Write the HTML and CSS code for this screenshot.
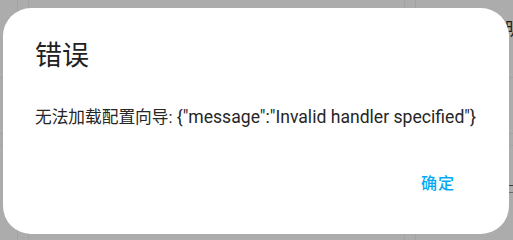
FILE: index.html
```html
<!DOCTYPE html>
<html lang="zh">
<head>
<meta charset="utf-8">
<title>错误</title>
<link rel="stylesheet" href="styles.css">
</head>
<body>
<div class="backdrop">
  <span class="bg-text">明</span>
  <span class="bg-rule"></span>
</div>
<div class="scrim">
  <div class="dialog" role="alertdialog">
    <h2 class="title">错误</h2>
    <p class="content">无法加载配置向导: <span class="msg">{"message":"Invalid handler specified"}</span></p>
    <div class="actions">
      <button class="btn">确定</button>
    </div>
  </div>
</div>
</body>
</html>
```
FILE: styles.css
```css
html, body {
  margin: 0;
  padding: 0;
  width: 513px;
  height: 239px;
  overflow: hidden;
}
body {
  position: relative;
  font-family: Roboto, "Noto Sans CJK SC", sans-serif;
  background-color: #acacac;
  background-image:
    linear-gradient(to right, transparent 17px, #a2a2a2 17px, #a2a2a2 18px, transparent 18px,
      transparent 28px, #a2a2a2 28px, #a2a2a2 29px, transparent 29px,
      transparent 404px, #a2a2a2 404px, #a2a2a2 405px, transparent 405px,
      transparent 415px, #a2a2a2 415px, #a2a2a2 416px, transparent 416px),
    linear-gradient(to bottom, transparent 77px, #a2a2a2 77px, #a2a2a2 78px, transparent 78px,
      transparent 133px, #a2a2a2 133px, #a2a2a2 134px, transparent 134px,
      transparent 145px, #a2a2a2 145px, #a2a2a2 146px, transparent 146px);
}
.backdrop {
  height: 0;
}
.bg-text {
  position: absolute;
  left: 505px;
  top: 19px;
  font-size: 17px;
  color: #1b1b1b;
  line-height: 20px;
}
.bg-rule {
  position: absolute;
  left: 507px;
  top: 185px;
  width: 6px;
  height: 6px;
  border-top: 1px solid #3c3c3c;
  border-bottom: 1px solid #6a6a6a;
}
.scrim {
  position: absolute;
  inset: 0;
  display: flex;
  padding: 8px 4px 5px 3px;
}
.dialog {
  flex: 1;
  min-width: 0;
  background: #ffffff;
  border-radius: 28px;
  padding: 0 28px 0 32px;
  display: flex;
  flex-direction: column;
}
.title {
  margin: 28px 0 0 0;
  font-size: 27px;
  line-height: 40px;
  font-weight: 400;
  color: #212121;
}
.content {
  margin: 29px 0 0 0;
  font-size: 16.7px;
  line-height: 24px;
  color: #262626;
  white-space: nowrap;
}
.msg {
  font-size: 17.6px;
}
.actions {
  display: flex;
  justify-content: flex-end;
  margin-top: 34px;
  padding-right: 18px;
}
.btn {
  border: none;
  background: none;
  font-family: Roboto, "Noto Sans CJK SC", sans-serif;
  font-size: 16px;
  font-weight: 500;
  letter-spacing: 1px;
  color: #03a9f4;
  padding: 0 8px;
  height: 36px;
}
```
